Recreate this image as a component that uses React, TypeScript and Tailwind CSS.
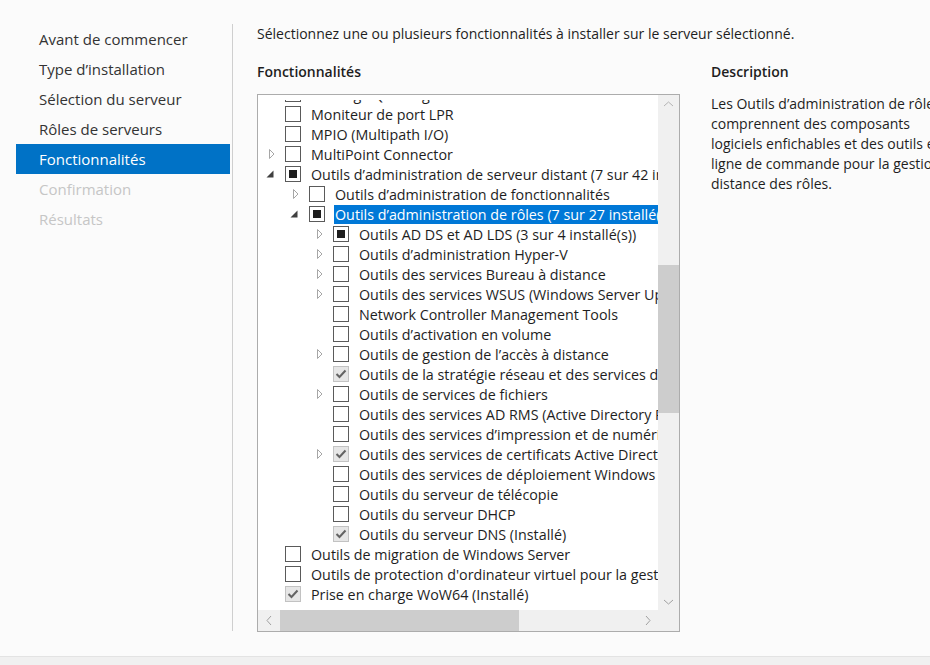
import React from 'react';

type State = 'off' | 'mixed' | 'on';
type Row = { level: number; exp?: 'open' | 'closed'; state: State; text: string; selected?: boolean };

const rows: Row[] = [
  { level: 0, exp: 'closed', state: 'off', text: 'Message Queuing' },
  { level: 0, state: 'off', text: 'Moniteur de port LPR' },
  { level: 0, state: 'off', text: 'MPIO (Multipath I/O)' },
  { level: 0, exp: 'closed', state: 'off', text: 'MultiPoint Connector' },
  { level: 0, exp: 'open', state: 'mixed', text: 'Outils d’administration de serveur distant (7 sur 42 installé(s))' },
  { level: 1, exp: 'closed', state: 'off', text: 'Outils d’administration de fonctionnalités' },
  { level: 1, exp: 'open', state: 'mixed', text: 'Outils d’administration de rôles (7 sur 27 installé(s))', selected: true },
  { level: 2, exp: 'closed', state: 'mixed', text: 'Outils AD DS et AD LDS (3 sur 4 installé(s))' },
  { level: 2, exp: 'closed', state: 'off', text: 'Outils d’administration Hyper-V' },
  { level: 2, exp: 'closed', state: 'off', text: 'Outils des services Bureau à distance' },
  { level: 2, exp: 'closed', state: 'off', text: 'Outils des services WSUS (Windows Server Update Services)' },
  { level: 2, state: 'off', text: 'Network Controller Management Tools' },
  { level: 2, state: 'off', text: 'Outils d’activation en volume' },
  { level: 2, exp: 'closed', state: 'off', text: 'Outils de gestion de l’accès à distance' },
  { level: 2, state: 'on', text: 'Outils de la stratégie réseau et des services d’accès (Installé)' },
  { level: 2, exp: 'closed', state: 'off', text: 'Outils de services de fichiers' },
  { level: 2, state: 'off', text: 'Outils des services AD RMS (Active Directory Rights Management Services)' },
  { level: 2, state: 'off', text: 'Outils des services d’impression et de numérisation de documents' },
  { level: 2, exp: 'closed', state: 'on', text: 'Outils des services de certificats Active Directory (Installé)' },
  { level: 2, state: 'off', text: 'Outils des services de déploiement Windows' },
  { level: 2, state: 'off', text: 'Outils du serveur de télécopie' },
  { level: 2, state: 'off', text: 'Outils du serveur DHCP' },
  { level: 2, state: 'on', text: 'Outils du serveur DNS (Installé)' },
  { level: 0, state: 'off', text: 'Outils de migration de Windows Server' },
  { level: 0, state: 'off', text: 'Outils de protection d\'ordinateur virtuel pour la gestion de l\'infrastructure' },
  { level: 0, state: 'on', text: 'Prise en charge WoW64 (Installé)' },
];

const navItems = [
  { label: 'Avant de commencer', kind: 'normal' },
  { label: 'Type d’installation', kind: 'normal' },
  { label: 'Sélection du serveur', kind: 'normal' },
  { label: 'Rôles de serveurs', kind: 'normal' },
  { label: 'Fonctionnalités', kind: 'active' },
  { label: 'Confirmation', kind: 'disabled' },
  { label: 'Résultats', kind: 'disabled' },
];

const indents = ['w-0', 'w-[24px]', 'w-[48px]'];

function Expander({ exp }: { exp?: 'open' | 'closed' }) {
  return (
    <div className="flex h-[20px] w-[27px] shrink-0 items-center pl-[8px]">
      {exp === 'closed' && (
        <svg width="10" height="10" viewBox="0 0 10 10">
          <path d="M3.5 0.5 L8 5 L3.5 9.5 Z" fill="none" stroke="#a6a6a6" strokeWidth="1" />
        </svg>
      )}
      {exp === 'open' && (
        <svg width="10" height="10" viewBox="0 0 10 10">
          <path d="M7.5 1.5 L7.5 8.5 L0.5 8.5 Z" fill="#404040" />
        </svg>
      )}
    </div>
  );
}

function Check({ state }: { state: State }) {
  if (state === 'on') {
    return (
      <div className="flex h-[16px] w-[16px] shrink-0 items-center justify-center border border-[#c2c2c2] bg-[#e6e6e6]">
        <svg width="14" height="14" viewBox="0 0 14 14">
          <path d="M2.5 7 L5.5 10 L11.5 3.5" fill="none" stroke="#636363" strokeWidth="2" />
        </svg>
      </div>
    );
  }
  return (
    <div className="flex h-[16px] w-[16px] shrink-0 items-center justify-center border border-[#5a5a5a] bg-white">
      {state === 'mixed' && <div className="h-[8px] w-[8px] bg-[#1e1e1e]" />}
    </div>
  );
}

function ChevronSvg({ d, color = '#a0a0a0' }: { d: string; color?: string }) {
  return (
    <svg width="11" height="11" viewBox="0 0 11 11">
      <path d={d} fill="none" stroke={color} strokeWidth="1" />
    </svg>
  );
}

export default function App() {
  return (
    <div className="flex h-[665px] w-[930px] flex-col overflow-hidden bg-[#fbfbfb] font-['Open_Sans',sans-serif] text-[14px] text-[#1e1e1e]">
      <div className="flex h-[656px] shrink-0">
        {/* Steps */}
        <div className="w-[232px] shrink-0 pl-[16px] pt-[24px]">
          {navItems.map((item) => (
            <div
              key={item.label}
              className={`flex h-[30px] w-[214px] items-center pl-[23px] text-[15px] ${
                item.kind === 'active'
                  ? 'bg-[#0072c6] text-white'
                  : item.kind === 'disabled'
                  ? 'text-[#c6c6c6]'
                  : 'text-[#333333]'
              }`}
            >
              {item.label}
            </div>
          ))}
        </div>
        <div className="mt-[24px] h-[607px] w-px shrink-0 bg-[#cfcfcf]" />

        {/* Content */}
        <div className="flex min-w-0 flex-1 flex-col pl-[24px] pt-[24px]">
          <div className="h-[20px] whitespace-nowrap leading-[20px]">
            Sélectionnez une ou plusieurs fonctionnalités à installer sur le serveur sélectionné.
          </div>
          <div className="mt-[18px] flex">
            <div className="flex w-[423px] shrink-0 flex-col">
              <div className="h-[20px] font-semibold leading-[20px]">Fonctionnalités</div>
              <div className="mt-[12px] flex h-[538px] w-[423px] flex-col border border-[#acacac] bg-white">
                <div className="flex h-[515px]">
                  <div className="w-[400px] pt-[5px]">
                    <div className="h-[510px] overflow-hidden">
                      <div className="-mt-[16px] text-[14.3px]">
                        {rows.map((r, i) => (
                          <div key={i} className="flex h-[20px] items-center whitespace-nowrap leading-[20px]">
                            <div className={`${indents[r.level]} shrink-0`} />
                            <Expander exp={r.exp} />
                            <Check state={r.state} />
                            <span
                              className={`ml-[9px] h-[19px] px-[1px] leading-[19px] ${
                                r.selected ? 'bg-[#0078d7] text-white' : ''
                              }`}
                            >
                              {r.text}
                            </span>
                          </div>
                        ))}
                      </div>
                    </div>
                  </div>
                  {/* vertical scrollbar */}
                  <div className="flex w-[21px] shrink-0 flex-col bg-[#f0f0f0]">
                    <div className="flex h-[17px] items-center justify-center pt-[2px]">
                      <ChevronSvg d="M1 7 L5.5 3 L10 7" color="#b4b4b4" />
                    </div>
                    <div className="flex-1">
                      <div className="mt-[153px] h-[148px] bg-[#cdcdcd]" />
                    </div>
                    <div className="flex h-[17px] items-center justify-center">
                      <ChevronSvg d="M1 4 L5.5 8 L10 4" color="#a0a0a0" />
                    </div>
                  </div>
                </div>
                {/* horizontal scrollbar */}
                <div className="flex h-[21px] bg-[#f0f0f0]">
                  <div className="flex w-[22px] shrink-0 items-center justify-center">
                    <ChevronSvg d="M7 1 L3 5.5 L7 10" />
                  </div>
                  <div className="w-[239px] shrink-0 bg-[#cdcdcd]" />
                  <div className="flex-1" />
                  <div className="flex w-[22px] shrink-0 items-center justify-center">
                    <ChevronSvg d="M4 1 L8 5.5 L4 10" />
                  </div>
                  <div className="w-[21px] shrink-0 bg-[#f0f0f0]" />
                </div>
              </div>
            </div>

            {/* Description */}
            <div className="ml-[31px] shrink-0 whitespace-nowrap">
              <div className="h-[20px] font-semibold leading-[20px]">Description</div>
              <div className="mt-[12px] leading-[20px]">
                <div>Les Outils d’administration de rôles</div>
                <div>comprennent des composants</div>
                <div>logiciels enfichables et des outils en</div>
                <div>ligne de commande pour la gestion à</div>
                <div>distance des rôles.</div>
              </div>
            </div>
          </div>
        </div>
      </div>
      <div className="flex-1 border-t border-[#e3e3e3] bg-[#f0f0f0]" />
    </div>
  );
}
